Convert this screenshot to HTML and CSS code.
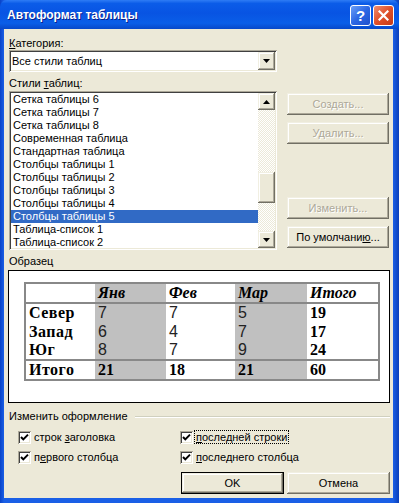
FILE: index.html
```html
<!DOCTYPE html>
<html>
<head>
    <meta charset="UTF-8">
    <title>Автоформат таблицы</title>
    <link rel="stylesheet" href="styles.css">
</head>
<body>
    <div class="window">
        <div class="titlebar">
            <span class="title">Автоформат таблицы</span>
            <div class="caption-buttons">
                <span class="cap-btn help">?</span>
                <span class="cap-btn close">
                    <svg width="11" height="11" viewBox="0 0 11 11"><path d="M1.5 1.5 L9.5 9.5 M9.5 1.5 L1.5 9.5" stroke="#fff" stroke-width="2.2" stroke-linecap="square"/></svg>
                </span>
            </div>
        </div>

        <div class="client">
            <div class="top">
                <div class="left-col">
                    <div class="label first"><u>К</u>атегория:</div>
                    <div class="combo">
                        <span class="combo-text">Все стили таблиц</span>
                        <span class="raised drop-btn">
                            <svg width="7" height="4" viewBox="0 0 7 4"><path d="M0 0 H7 L3.5 4 Z" fill="#000"/></svg>
                        </span>
                    </div>
                    <div class="label">Стили <u>т</u>аблиц:</div>
                    <div class="listbox">
                        <ul class="items">
                            <li>Сетка таблицы 6</li>
                            <li>Сетка таблицы 7</li>
                            <li>Сетка таблицы 8</li>
                            <li>Современная таблица</li>
                            <li>Стандартная таблица</li>
                            <li>Столбцы таблицы 1</li>
                            <li>Столбцы таблицы 2</li>
                            <li>Столбцы таблицы 3</li>
                            <li>Столбцы таблицы 4</li>
                            <li class="selected">Столбцы таблицы 5</li>
                            <li>Таблица-список 1</li>
                            <li>Таблица-список 2</li>
                        </ul>
                        <div class="scrollbar">
                            <span class="raised sb-btn">
                                <svg width="7" height="4" viewBox="0 0 7 4"><path d="M0 4 H7 L3.5 0 Z" fill="#000"/></svg>
                            </span>
                            <span class="sb-track upper"></span>
                            <span class="raised sb-thumb"></span>
                            <span class="sb-track lower"></span>
                            <span class="raised sb-btn">
                                <svg width="7" height="4" viewBox="0 0 7 4"><path d="M0 0 H7 L3.5 4 Z" fill="#000"/></svg>
                            </span>
                        </div>
                    </div>
                </div>

                <div class="side-buttons">
                    <span class="raised btn disabled">Создать...</span>
                    <span class="raised btn disabled gap-small">Удалить...</span>
                    <span class="raised btn disabled gap-big">Изменить...</span>
                    <span class="raised btn gap-small">По умолчани<u>ю</u>...</span>
                </div>
            </div>

            <div class="label sample-label">Образец</div>
            <div class="preview">
                <table class="sample">
                    <colgroup>
                        <col class="c1"><col class="c2"><col class="c3"><col class="c4"><col class="c5">
                    </colgroup>
                    <tr class="head">
                        <td></td>
                        <td class="g">Янв</td>
                        <td>Фев</td>
                        <td class="g">Мар</td>
                        <td>Итого</td>
                    </tr>
                    <tr>
                        <th>Север</th>
                        <td class="g num">7</td>
                        <td class="num">7</td>
                        <td class="g num">5</td>
                        <td class="sum">19</td>
                    </tr>
                    <tr>
                        <th>Запад</th>
                        <td class="g num">6</td>
                        <td class="num">4</td>
                        <td class="g num">7</td>
                        <td class="sum">17</td>
                    </tr>
                    <tr>
                        <th>Юг</th>
                        <td class="g num">8</td>
                        <td class="num">7</td>
                        <td class="g num">9</td>
                        <td class="sum">24</td>
                    </tr>
                    <tr class="total">
                        <th>Итого</th>
                        <td class="g sum">21</td>
                        <td class="sum">18</td>
                        <td class="g sum">21</td>
                        <td class="sum">60</td>
                    </tr>
                </table>
            </div>

            <div class="group-title">
                <span>Изменить оформление</span>
                <span class="etch"></span>
            </div>

            <div class="checks">
                <label class="check">
                    <span class="box"><svg width="9" height="9" viewBox="0 0 9 9"><path d="M1 4 L3.3 6.4 L8 1.6" stroke="#000" stroke-width="2" fill="none"/></svg></span>
                    <span>строк <u>з</u>аголовка</span>
                </label>
                <label class="check">
                    <span class="box"><svg width="9" height="9" viewBox="0 0 9 9"><path d="M1 4 L3.3 6.4 L8 1.6" stroke="#000" stroke-width="2" fill="none"/></svg></span>
                    <span class="focus"><u>п</u>оследней строки</span>
                </label>
                <label class="check">
                    <span class="box"><svg width="9" height="9" viewBox="0 0 9 9"><path d="M1 4 L3.3 6.4 L8 1.6" stroke="#000" stroke-width="2" fill="none"/></svg></span>
                    <span>п<u>е</u>рвого столбца</span>
                </label>
                <label class="check">
                    <span class="box"><svg width="9" height="9" viewBox="0 0 9 9"><path d="M1 4 L3.3 6.4 L8 1.6" stroke="#000" stroke-width="2" fill="none"/></svg></span>
                    <span><u>п</u>оследнего столбца</span>
                </label>
            </div>

            <div class="dialog-buttons">
                <span class="raised btn default">OK</span>
                <span class="raised btn">Отмена</span>
            </div>
        </div>
    </div>
</body>
</html>
```

FILE: styles.css
```css
* {
    margin: 0;
    padding: 0;
    box-sizing: border-box;
    list-style: none;
}

body {
    background: #0a4fd8;
    font-family: 'Liberation Sans', Arial, sans-serif;
    font-size: 11px;
    color: #000;
}

.window {
    width: 399px;
    height: 503px;
    display: flex;
    flex-direction: column;
    background: linear-gradient(to right, #0842c8 0, #1a5fe6 4px, #1a5fe6 393px, #0b3fb8 399px);
}

/* title bar */
.titlebar {
    height: 29px;
    display: flex;
    align-items: flex-start;
    justify-content: space-between;
    background: linear-gradient(to bottom, #2e7cf5 0%, #0b5ce8 12%, #0854e3 45%, #0a5ee8 80%, #0748c9 100%);
    border-radius: 7px 7px 0 0;
}

.title {
    padding: 8px 0 0 7px;
    color: #fff;
    font-weight: bold;
    font-size: 12px;
    text-shadow: 1px 1px #0a1f8c;
}

.caption-buttons {
    display: flex;
    gap: 2px;
    padding: 5px 5px 0 0;
}

.cap-btn {
    width: 21px;
    height: 21px;
    border: 1px solid #fff;
    border-radius: 3px;
    display: flex;
    align-items: center;
    justify-content: center;
    color: #fff;
}

.help {
    background: linear-gradient(135deg, #6a9ff7 0%, #2c67e4 50%, #1f4fcc 100%);
    font-weight: bold;
    font-size: 15px;
}

.close {
    background: linear-gradient(135deg, #ef8e71 0%, #e0502a 50%, #c53a17 100%);
}

/* client area */
.client {
    flex: 1;
    margin: 0 6px 5px 4px;
    background: #ece9d8;
    padding: 8px 0 0 5px;
}

.top {
    display: flex;
    align-items: flex-start;
}

.left-col {
    width: 268px;
}

.label {
    height: 13px;
    line-height: 13px;
}

.label + .listbox {
    margin-top: 1px;
}

.combo + .label {
    margin-top: 5px;
}

.raised {
    background: #ece9d8;
    box-shadow: inset -1px -1px #716f64, inset 1px 1px #f1efe2, inset -2px -2px #aca899, inset 2px 2px #fff;
}

.combo {
    height: 22px;
    background: #fff;
    display: flex;
    align-items: center;
    justify-content: space-between;
    padding: 2px;
    box-shadow: inset 1px 1px #aca899, inset -1px -1px #fff, inset 2px 2px #404040, inset -2px -2px #ece9d8;
}

.combo-text {
    padding-left: 1px;
}

.drop-btn {
    width: 17px;
    height: 18px;
    display: flex;
    align-items: center;
    justify-content: center;
}

.listbox {
    height: 159px;
    background: #fff;
    padding: 2px;
    display: flex;
    box-shadow: inset 1px 1px #aca899, inset -1px -1px #fff, inset 2px 2px #404040, inset -2px -2px #ece9d8;
}

.items {
    flex: 1;
    overflow: hidden;
}

.items li {
    height: 13px;
    line-height: 13px;
    padding-left: 2px;
    white-space: nowrap;
}

.items .selected {
    background: #316ac5;
    color: #fff;
}

.scrollbar {
    width: 17px;
    display: flex;
    flex-direction: column;
}

.sb-btn {
    height: 17px;
    display: flex;
    align-items: center;
    justify-content: center;
}

.sb-track {
    background: repeating-conic-gradient(#ece9d8 0% 25%, #fff 0% 50%) 0 0 / 2px 2px;
}

.sb-track.upper {
    height: 62px;
}

.sb-track.lower {
    flex: 1;
}

.sb-thumb {
    height: 31px;
}

/* buttons */
.side-buttons {
    width: 102px;
    margin-left: 10px;
    padding-top: 56px;
    display: flex;
    flex-direction: column;
}

.btn {
    height: 22px;
    display: flex;
    align-items: center;
    justify-content: center;
}

.btn.disabled {
    color: #aca899;
    text-shadow: 1px 1px #fff;
}

.gap-small {
    margin-top: 7px;
}

.gap-big {
    margin-top: 53px;
}

.btn.default {
    border: 1px solid #000;
}

/* sample */
.sample-label {
    margin-top: 5px;
}

.preview {
    width: 382px;
    height: 133px;
    margin: 2px 0 0 -1px;
    background: #fff;
    border: 1px solid #000;
    padding: 11px 0 0 15px;
}

.sample {
    width: 354px;
    border-collapse: collapse;
    table-layout: fixed;
    border: 2px solid #888;
    font-family: 'Liberation Serif', 'Times New Roman', serif;
    font-size: 16px;
}

.c1 { width: 70px; }
.c2 { width: 71px; }
.c3 { width: 69px; }
.c4 { width: 72px; }
.c5 { width: 72px; }

.sample td,
.sample th {
    padding: 0 3px;
    height: 19px;
    line-height: 18px;
    text-align: left;
    white-space: nowrap;
}

.sample th {
    font-weight: bold;
    letter-spacing: 0.5px;
}

.sample .head td {
    height: 18px;
    font-weight: bold;
    font-style: italic;
    border-bottom: 2px solid #888;
}

.sample .total th,
.sample .total td {
    border-top: 2px solid #888;
}

.sample .g {
    background: #c0c0c0;
}

.sample .num {
    font-family: 'Liberation Sans', Arial, sans-serif;
    font-size: 16px;
    color: #222;
}

.sample .sum {
    font-weight: bold;
}

/* options */
.group-title {
    margin-top: 7px;
    height: 13px;
    line-height: 13px;
    display: flex;
    align-items: center;
    padding-right: 3px;
}

.etch {
    flex: 1;
    margin-left: 7px;
    height: 2px;
    border-top: 1px solid #d0d0bf;
    border-bottom: 1px solid #fff;
}

.checks {
    margin-top: 7px;
    padding-left: 9px;
    display: grid;
    grid-template-columns: 162px 1fr;
    row-gap: 6px;
}

.check {
    height: 14px;
    display: flex;
    align-items: center;
}

.box {
    width: 13px;
    height: 13px;
    margin-right: 3px;
    background: #fff;
    display: flex;
    align-items: center;
    justify-content: center;
    box-shadow: inset 1px 1px #aca899, inset -1px -1px #fff, inset 2px 2px #404040, inset -2px -2px #ece9d8;
}

.focus {
    outline: 1px dotted #000;
    outline-offset: 0;
    padding: 0 1px;
    margin-left: -1px;
}

.dialog-buttons {
    margin-top: 8px;
    display: flex;
    justify-content: flex-end;
    gap: 3px;
    padding-right: 3px;
}

.dialog-buttons .btn {
    width: 103px;
}
```
